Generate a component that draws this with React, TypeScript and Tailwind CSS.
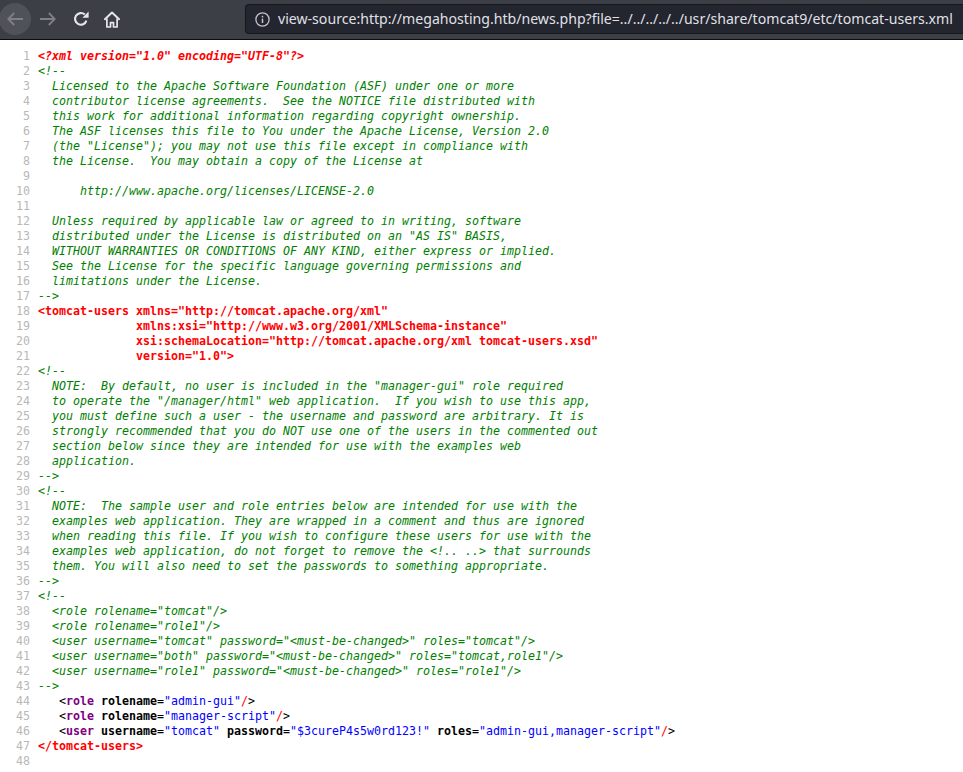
import React from 'react';

const comment = 'italic text-[#008000]';
const pi = 'font-bold italic text-[#ff0000]';
const err = 'font-bold text-[#ff0000]';

// plain comment / error lines, index + 1 = line number
const source: [string, string][] = [
  ['<?xml version="1.0" encoding="UTF-8"?>', pi],
  ['<!--', comment],
  ['  Licensed to the Apache Software Foundation (ASF) under one or more', comment],
  ['  contributor license agreements.  See the NOTICE file distributed with', comment],
  ['  this work for additional information regarding copyright ownership.', comment],
  ['  The ASF licenses this file to You under the Apache License, Version 2.0', comment],
  ['  (the "License"); you may not use this file except in compliance with', comment],
  ['  the License.  You may obtain a copy of the License at', comment],
  ['', comment],
  ['      http://www.apache.org/licenses/LICENSE-2.0', comment],
  ['', comment],
  ['  Unless required by applicable law or agreed to in writing, software', comment],
  ['  distributed under the License is distributed on an "AS IS" BASIS,', comment],
  ['  WITHOUT WARRANTIES OR CONDITIONS OF ANY KIND, either express or implied.', comment],
  ['  See the License for the specific language governing permissions and', comment],
  ['  limitations under the License.', comment],
  ['-->', comment],
  ['<tomcat-users xmlns="http://tomcat.apache.org/xml"', err],
  ['              xmlns:xsi="http://www.w3.org/2001/XMLSchema-instance"', err],
  ['              xsi:schemaLocation="http://tomcat.apache.org/xml tomcat-users.xsd"', err],
  ['              version="1.0">', err],
  ['<!--', comment],
  ['  NOTE:  By default, no user is included in the "manager-gui" role required', comment],
  ['  to operate the "/manager/html" web application.  If you wish to use this app,', comment],
  ['  you must define such a user - the username and password are arbitrary. It is', comment],
  ['  strongly recommended that you do NOT use one of the users in the commented out', comment],
  ['  section below since they are intended for use with the examples web', comment],
  ['  application.', comment],
  ['-->', comment],
  ['<!--', comment],
  ['  NOTE:  The sample user and role entries below are intended for use with the', comment],
  ['  examples web application. They are wrapped in a comment and thus are ignored', comment],
  ['  when reading this file. If you wish to configure these users for use with the', comment],
  ['  examples web application, do not forget to remove the <!.. ..> that surrounds', comment],
  ['  them. You will also need to set the passwords to something appropriate.', comment],
  ['-->', comment],
  ['<!--', comment],
  ['  <role rolename="tomcat"/>', comment],
  ['  <role rolename="role1"/>', comment],
  ['  <user username="tomcat" password="<must-be-changed>" roles="tomcat"/>', comment],
  ['  <user username="both" password="<must-be-changed>" roles="tomcat,role1"/>', comment],
  ['  <user username="role1" password="<must-be-changed>" roles="role1"/>', comment],
  ['-->', comment],
];

function Tag({ name, attrs }: { name: string; attrs: [string, string][] }) {
  return (
    <>
      {'   <'}
      <span className="font-bold text-[#800080]">{name}</span>
      {attrs.map(([k, v]) => (
        <React.Fragment key={k}>
          {' '}
          <span className="font-bold">{k}</span>=<span className="text-[#0000ff]">"{v}"</span>
        </React.Fragment>
      ))}
      <span className="text-[#ff0000]">/</span>
      {'>'}
    </>
  );
}

function Line({ n, children }: { n: number; children?: React.ReactNode }) {
  return (
    <div className="flex h-[15px] leading-[15px]">
      <div className="w-[31px] shrink-0 pr-px text-right text-[#b8b8b8]">{n}</div>
      <div className="ml-[7px] whitespace-pre text-black">{children}</div>
    </div>
  );
}

function BackIcon() {
  return (
    <svg width="16" height="14" viewBox="0 0 16 14" fill="none" stroke="#7f8086" strokeWidth="1.8" className="shrink-0">
      <path d="M16 7H1.5M7.2 1 1.3 7l5.9 6" />
    </svg>
  );
}

function ForwardIcon() {
  return (
    <svg width="16" height="14" viewBox="0 0 16 14" fill="none" stroke="#7f8086" strokeWidth="1.8" className="ml-[9px] shrink-0">
      <path d="M0 7h14.5M8.8 1l5.9 6-5.9 6" />
    </svg>
  );
}

function ReloadIcon() {
  return (
    <svg width="16" height="16" viewBox="0 0 16 16" fill="none" className="ml-[17px] shrink-0">
      <path d="M13.4 9.6A5.8 5.8 0 1 1 11.8 3.6" stroke="#e6e6e8" strokeWidth="2.1" />
      <path d="M15.6.6v6.2H9.4z" fill="#e6e6e8" />
    </svg>
  );
}

function HomeIcon() {
  return (
    <svg width="16" height="17" viewBox="0 0 16 17" fill="none" className="ml-[15px] shrink-0">
      <path d="M.9 8.2 8 1.5l7.1 6.7" stroke="#e8e8ea" strokeWidth="1.9" strokeLinecap="round" strokeLinejoin="round" />
      <path d="M2.9 7.6V16h3.6v-4.4h3V16h3.6V7.6" stroke="#e8e8ea" strokeWidth="1.7" strokeLinejoin="round" />
    </svg>
  );
}

function InfoIcon() {
  return (
    <svg width="15" height="15" viewBox="0 0 15 15" fill="none" stroke="#c4c5ca" className="shrink-0">
      <circle cx="7.5" cy="7.5" r="6.6" strokeWidth="1.3" />
      <path d="M7.5 6.6v4.4" strokeWidth="1.5" />
      <path d="M7.5 3.8v1.6" strokeWidth="1.5" />
    </svg>
  );
}

export default function App() {
  return (
    <div className="h-[772px] w-[963px] overflow-hidden bg-white">
      <div className="flex h-[40px] items-center border-b border-b-[#0c0c0d] bg-[#3d3f47] pb-px">
        <div className="-ml-px flex h-[32px] w-[32px] shrink-0 items-center justify-center rounded-full bg-[#50525a]">
          <BackIcon />
        </div>
        <ForwardIcon />
        <ReloadIcon />
        <HomeIcon />
        <div className="ml-[125px] flex h-[30px] flex-1 items-center rounded-l-[4px] border border-r-0 border-[#16171c] bg-[#23252f] pl-[9px]">
          <InfoIcon />
          <span className="ml-[8px] whitespace-pre font-['Noto_Sans',sans-serif] text-[14.12px] text-[#e0e1e6]">
            view-source:http://megahosting.htb/news.php?file=../../../../../usr/share/tomcat9/etc/tomcat-users.xml
          </span>
        </div>
      </div>
      <div className="pt-[9px] font-['DejaVu_Sans_Mono',monospace] text-[11.63px]">
        {source.map(([text, cls], i) => (
          <Line key={i} n={i + 1}>
            <span className={cls}>{text}</span>
          </Line>
        ))}
        <Line n={44}>
          <Tag name="role" attrs={[['rolename', 'admin-gui']]} />
        </Line>
        <Line n={45}>
          <Tag name="role" attrs={[['rolename', 'manager-script']]} />
        </Line>
        <Line n={46}>
          <Tag
            name="user"
            attrs={[
              ['username', 'tomcat'],
              ['password', '$3cureP4s5w0rd123!'],
              ['roles', 'admin-gui,manager-script'],
            ]}
          />
        </Line>
        <Line n={47}>
          <span className={err}>{'</tomcat-users>'}</span>
        </Line>
        <Line n={48} />
      </div>
    </div>
  );
}
